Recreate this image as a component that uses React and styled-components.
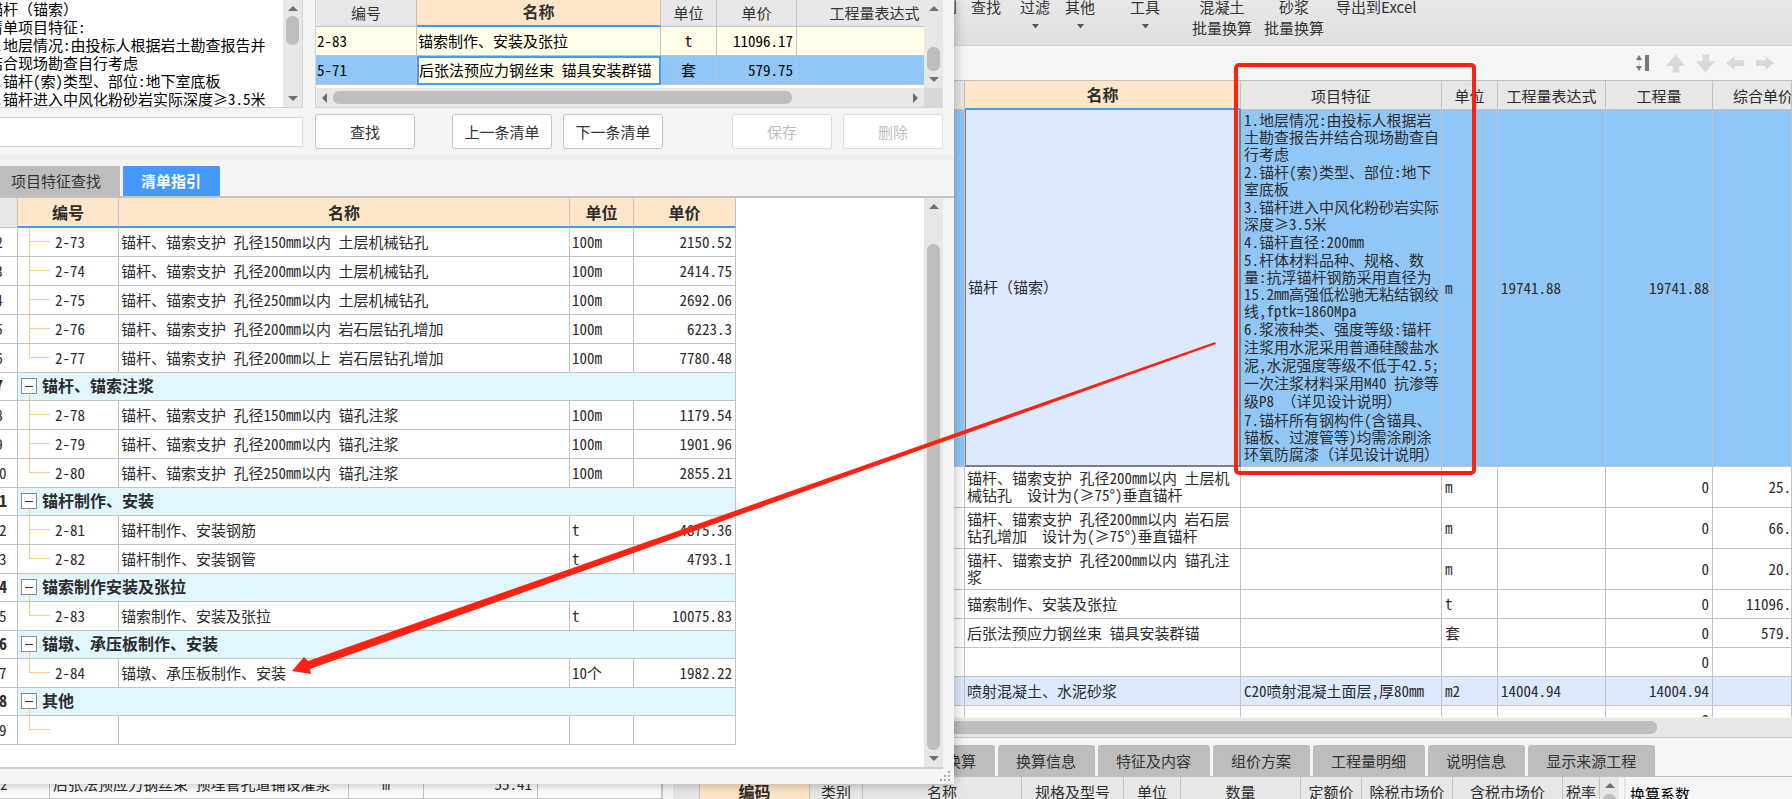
import React from "react";
import styled, { createGlobalStyle, css } from "styled-components";

const GRID_FONT = '"Noto Sans Mono CJK SC", "Noto Sans CJK SC", monospace';
const UI_FONT = '"Noto Sans CJK SC", sans-serif';
const LINE = "#c3c3c3";
const CREAM = "#ffe6c8";
const BLUE = "#4499ff";
const RED = "#ff2212";

const Global = createGlobalStyle`
  *, *::before, *::after { box-sizing: border-box; }
  body { margin: 0; overflow: hidden; font: 15px/17px ${GRID_FONT}; color: #2c2c2c; }
  button, input, textarea { font: inherit; color: inherit; }
`;

const Desktop = styled.div`
  position: relative;
  height: 100vh;
  overflow: hidden;
  background: #f5f5f5;
`;

/* ---------- shared parts ---------- */

const ScrollBar = styled.div`
  display: flex;
  flex: none;
  flex-direction: ${(p) => (p.$horizontal ? "row" : "column")};
  align-items: center;
  background: #e7e7e7;
  ${(p) => (p.$horizontal ? "height: 19px; padding: 0 5px;" : "width: 19px; padding: 5px 0;")}
`;

const Track = styled.div`
  display: flex;
  flex: 1;
  min-height: 0;
  flex-direction: ${(p) => (p.$horizontal ? "row" : "column")};
  padding: ${(p) => p.$pad || "0"};
`;

const Thumb = styled.div`
  border-radius: 6px;
  background: #bebebe;
  ${(p) => (p.$horizontal ? "height: 13px;" : "width: 13px;")}
  flex: ${(p) => p.$flex || "1"};
`;

const arrows = {
  up: "M0 6 L5 1 L10 6Z",
  down: "M0 1 L10 1 L5 6Z",
  left: "M6 0 L1 5 L6 10Z",
  right: "M1 0 L6 5 L1 10Z",
};

function Arrow({ dir, color = "#6e6e78" }) {
  const side = dir === "left" || dir === "right";
  return (
    <svg width={side ? 7 : 10} height={side ? 10 : 7} aria-hidden="true">
      <path d={arrows[dir]} fill={color} />
    </svg>
  );
}

const Table = styled.table`
  width: ${(p) => p.$width || "100%"};
  table-layout: fixed;
  border-collapse: separate;
  border-spacing: 0;
`;

const Th = styled.th`
  height: 29px;
  padding: ${(p) => p.$pad || "0"};
  border: solid ${LINE};
  border-width: 0 1px 1px 0;
  background: #e7e7e7;
  font-weight: 400;
  white-space: nowrap;
  overflow: hidden;
  text-align: ${(p) => p.$align || "center"};
  ${(p) =>
    p.$active &&
    css`
      background: ${CREAM};
      border-bottom: ${p.$plain ? `1px solid ${LINE}` : `2px solid ${BLUE}`};
      font-size: 16px;
      font-weight: 700;
    `}
`;

const Td = styled.td`
  height: ${(p) => p.$h || 29}px;
  padding: ${(p) => p.$pad || "0 3px 2px"};
  border: solid ${LINE};
  border-width: 0 1px 1px 0;
  text-align: ${(p) => p.$align || "left"};
  white-space: nowrap;
  overflow: hidden;
  ${(p) => p.$selected && "background: #dce9ff; border: 2px solid #7c7f84; border-width: 0 2px 2px 1px;"}
`;

const Tab = styled.button`
  height: 31px;
  flex: none;
  padding: 0 19px 0 18px;
  border: 0;
  border-radius: 3px 3px 0 0;
  font: ${(p) => (p.$active ? 700 : 400)} 15px/17px ${UI_FONT};
  background: ${(p) => (p.$active ? BLUE : "#bdbdbd")};
  color: ${(p) => (p.$active ? "#fff" : "#333")};
`;

/* ---------- main window ---------- */

const MainWindow = styled.main`
  display: flex;
  flex-direction: column;
  height: 100%;
`;

const Ribbon = styled.header`
  display: flex;
  flex: none;
  align-items: flex-end;
  height: 46px;
  padding: 0 0 3px 942px;
  border-bottom: 1px solid #d2d2d2;
  background: linear-gradient(#e8e8e8, #dfdfdf);
  overflow: hidden;
`;

const RibbonButton = styled.button`
  display: flex;
  flex: none;
  flex-direction: column;
  align-items: center;
  height: 46px;
  margin-left: ${(p) => p.$gap}px;
  padding: 0;
  border: 0;
  background: none;
  font: 15px/21px ${UI_FONT};
  color: #333;
  svg { margin-top: 7px; }
`;

const Panes = styled.div`
  display: flex;
  flex: 1;
  min-height: 0;
`;

const LeftPane = styled.section`
  display: flex;
  flex: none;
  flex-direction: column;
  justify-content: flex-end;
  width: 663px;
  margin-right: 10px;
  border-right: 1px solid ${LINE};
  background: #fff;
`;

const RightPane = styled.section`
  display: flex;
  flex: 1;
  flex-direction: column;
  min-width: 0;
`;

const MoveBar = styled.div`
  display: flex;
  flex: none;
  align-items: center;
  justify-content: flex-end;
  gap: 16px;
  height: 35px;
  padding-right: 17px;
  border-bottom: 1px solid ${LINE};
`;

const MoveGroup = styled.div`
  display: flex;
  gap: 11px;
`;

const IconButton = styled.button`
  display: flex;
  padding: 0;
  border: 0;
  background: none;
`;

const BillArea = styled.div`
  flex: 1;
  min-height: 0;
  overflow: hidden;
  border-bottom: 1px solid #f5f5f5;
  background: #fff;
`;

const BillRow = styled.tr`
  background: ${(p) => p.$bg || "#fff"};
`;

const Features = styled.ol`
  display: flex;
  flex-direction: column;
  gap: 1px;
  height: 352px;
  margin: 0;
  padding: 0;
  list-style: none;
  li:nth-last-child(2) { line-height: 18px; }
`;

const TextLine = styled.div`
  white-space: pre;
`;

const TabStrip = styled.nav`
  display: flex;
  flex: none;
  align-items: flex-end;
  gap: 3px;
  height: ${(p) => p.$h}px;
  padding-left: ${(p) => p.$left}px;
  border: solid ${LINE};
  border-width: ${(p) => (p.$top ? "1px 0 0" : "0 0 2px")};
  overflow: hidden;
`;

const Detail = styled.div`
  display: flex;
  flex: none;
  height: 23px;
  border-top: 1px solid ${LINE};
  overflow: hidden;
`;

const DetailGrid = styled.div`
  width: 927px;
  flex: none;
  overflow: hidden;
`;

const Ratio = styled.div`
  flex: 1;
  margin-left: 5px;
  padding: 8px 4px;
  border-left: 2px solid #e4e4e4;
  color: #000;
`;

/* ---------- dialog ---------- */

const Dialog = styled.section`
  position: absolute;
  top: 0;
  bottom: 15px;
  left: -18px;
  display: flex;
  flex-direction: column;
  width: 972px;
  background: #f4f4f4;
  box-shadow: 0 0 12px rgba(0, 0, 0, 0.3);
`;

const TopRow = styled.div`
  display: flex;
  flex: none;
  gap: 12px;
  height: 108px;
  padding-right: 11px;
`;

const NoteBox = styled.div`
  display: flex;
  flex: none;
  width: 321px;
  border: solid #d4d4d4;
  border-width: 0 1px 1px 0;
`;

const Note = styled.textarea`
  flex: 1;
  min-width: 0;
  padding: 0 0 0 6px;
  border: 0;
  outline: 0;
  resize: none;
  overflow: hidden;
  white-space: pre;
  line-height: 18px;
  color: #000;
  background: #fff;
`;

const QuotaBox = styled.div`
  display: grid;
  flex: 1;
  min-width: 0;
  grid-template: 88px 19px / 1fr 19px;
  border: solid #d4d4d4;
  border-width: 0 0 1px 1px;
`;

const QuotaView = styled.div`
  overflow: hidden;
  background: #fff;
  color: #000;
  th { height: 27px; padding-bottom: 2px; color: #333; }
`;

const Corner = styled.div`
  background: #d8d8d8;
`;

const EditCell = styled(Td)`
  border: 2px solid ${BLUE};
  background: #ffffea;
`;

const Actions = styled.div`
  display: flex;
  flex: none;
  align-items: center;
  height: 52px;
  padding-right: 11px;
  border-bottom: 5px solid #eeeeee;
  margin-bottom: 6px;
`;

const SearchInput = styled.input`
  width: 321px;
  height: 30px;
  margin-right: 12px;
  padding: 0 7px;
  border: 1px solid #d6d6d6;
  background: #fff;
  outline: 0;
`;

const Button = styled.button`
  width: 100px;
  height: 35px;
  margin-left: ${(p) => p.$gap || 0}px;
  padding: 0;
  border: 1px solid #c4c4c4;
  border-radius: 3px;
  background: #fff;
  font: 15px/17px ${UI_FONT};
  color: #333;
  &:disabled { border-color: #dcdcdc; color: #bfbfbf; }
`;

const GuideBox = styled.div`
  display: flex;
  flex: 1;
  min-height: 0;
  margin-right: 11px;
  border-bottom: 2px solid #d0d0d0;
`;

const GuideView = styled.div`
  flex: 1;
  overflow: hidden;
  background: #fff;
  th { height: 30px; }
`;

const GroupRow = styled.tr`
  font-size: 16px;
  font-weight: 700;
`;

const GroupCell = styled(Td)`
  background: #e2f6ff;
`;

const Tree = styled.div`
  display: flex;
  align-items: center;
  gap: 5px;
  height: ${(p) => p.$h}px;
`;

const TreeText = styled.span`
  padding-bottom: 2px;
`;

const Toggle = styled.button`
  display: flex;
  flex: none;
  padding: 0;
  border: 0;
  background: none;
`;

const Footer = styled.footer`
  display: flex;
  flex: none;
  justify-content: flex-end;
  height: 15px;
  padding: 2px 3px;
`;

const Marks = styled.svg`
  position: absolute;
  top: 0;
  left: 0;
  width: 100%;
  height: 100%;
  pointer-events: none;
`;

/* ---------- data ---------- */

const ribbon = [
  { text: "到", gap: 0 },
  { text: "查找", gap: 14 },
  { text: "过滤", gap: 19, menu: true },
  { text: "其他", gap: 15, menu: true },
  { text: "工具", gap: 35, menu: true },
  { text: "混凝土", second: "批量换算", gap: 32 },
  { text: "砂浆", second: "批量换算", gap: 12 },
  { text: "导出到Excel", gap: 12 },
];

const features = [
  ["1.地层情况:由投标人根据岩", "土勘查报告并结合现场勘查自", "行考虑"],
  ["2.锚杆(索)类型、部位:地下", "室底板"],
  ["3.锚杆进入中风化粉砂岩实际", "深度≥3.5米"],
  ["4.锚杆直径:200mm"],
  ["5.杆体材料品种、规格、数", "量:抗浮锚杆钢筋采用直径为", "15.2mm高强低松驰无粘结钢绞", "线,fptk=1860Mpa"],
  ["6.浆液种类、强度等级:锚杆", "注浆用水泥采用普通硅酸盐水", "泥,水泥强度等级不低于42.5;", "一次注浆材料采用M40 抗渗等", "级P8 （详见设计说明）"],
  ["7.锚杆所有钢构件(含锚具、", "锚板、过渡管等)均需涂刷涂", "环氧防腐漆（详见设计说明）"],
];

const bill = [
  { h: 41, name: ["锚杆、锚索支护 孔径200mm以内 土层机", "械钻孔  设计为(≥75°)垂直锚杆"], unit: "m", qty: "0", price: "25." },
  { h: 41, name: ["锚杆、锚索支护 孔径200mm以内 岩石层", "钻孔增加  设计为(≥75°)垂直锚杆"], unit: "m", qty: "0", price: "66." },
  { h: 41, name: ["锚杆、锚索支护 孔径200mm以内 锚孔注", "浆"], unit: "m", qty: "0", price: "20." },
  { name: ["锚索制作、安装及张拉"], unit: "t", qty: "0", price: "11096." },
  { name: ["后张法预应力钢丝束 锚具安装群锚"], unit: "套", qty: "0", price: "579." },
  { name: [], qty: "0" },
  { bg: "#dce9ff", name: ["喷射混凝土、水泥砂浆"], feature: "C20喷射混凝土面层,厚80mm", unit: "m2", expr: "14004.94", qty: "14004.94" },
  { name: [], qty: "0" },
];

const bottomTabs = ["工料机显示", "单价构成", "标准换算", "换算信息", "特征及内容", "组价方案", "工程量明细", "说明信息", "显示来源工程"];

const detailCols = [
  ["", 27], ["编码", 110], ["类别", 53], ["名称", 159], ["规格及型号", 102], ["单位", 57],
  ["数量", 120], ["定额价", 61], ["除税市场价", 91], ["含税市场价", 110], ["税率", 37],
];

const S = "锚杆、锚索支护 孔径";
const guide = [
  { no: 2, code: "2-73", name: S + "150mm以内 土层机械钻孔", unit: "100m", price: "2150.52" },
  { no: 3, code: "2-74", name: S + "200mm以内 土层机械钻孔", unit: "100m", price: "2414.75" },
  { no: 4, code: "2-75", name: S + "250mm以内 土层机械钻孔", unit: "100m", price: "2692.06" },
  { no: 5, code: "2-76", name: S + "200mm以内 岩石层钻孔增加", unit: "100m", price: "6223.3" },
  { no: 6, code: "2-77", name: S + "200mm以上 岩石层钻孔增加", unit: "100m", price: "7780.48", last: true },
  { no: 7, group: "锚杆、锚索注浆" },
  { no: 8, code: "2-78", name: S + "150mm以内 锚孔注浆", unit: "100m", price: "1179.54" },
  { no: 9, code: "2-79", name: S + "200mm以内 锚孔注浆", unit: "100m", price: "1901.96" },
  { no: 10, code: "2-80", name: S + "250mm以内 锚孔注浆", unit: "100m", price: "2855.21", last: true },
  { no: 11, group: "锚杆制作、安装" },
  { no: 12, code: "2-81", name: "锚杆制作、安装钢筋", unit: "t", price: "4875.36" },
  { no: 13, code: "2-82", name: "锚杆制作、安装钢管", unit: "t", price: "4793.1", last: true },
  { no: 14, group: "锚索制作安装及张拉" },
  { no: 15, code: "2-83", name: "锚索制作、安装及张拉", unit: "t", price: "10075.83", last: true },
  { no: 16, group: "锚墩、承压板制作、安装" },
  { no: 17, code: "2-84", name: "锚墩、承压板制作、安装", unit: "10个", price: "1982.22", last: true },
  { no: 18, group: "其他" },
  { no: 19, last: true },
];

const note = `锚杆（锚索）
清单项目特征:
1.地层情况:由投标人根据岩土勘查报告并
结合现场勘查自行考虑
2.锚杆(索)类型、部位:地下室底板
3.锚杆进入中风化粉砂岩实际深度≥3.5米`;

const Lines = ({ of }) => of.map((t, i) => <TextLine key={i}>{t}</TextLine>);

const Cols = ({ widths }) => (
  <colgroup>
    {widths.map((w, i) => <col key={i} width={w || undefined} />)}
  </colgroup>
);

const MOVE = {
  上移: "M10 0 L20 12 L14 12 L14 19 L7 19 L7 12 L0 12Z",
  下移: "M7 0 L14 0 L14 7 L20 7 L10 19 L0 7 L7 7Z",
  左移: "M0 9 L9 2 L9 6 L19 6 L19 12 L9 12 L9 16Z",
  右移: "M19 9 L10 2 L10 6 L0 6 L0 12 L10 12 L10 16Z",
};

function MoveTools() {
  return (
    <MoveBar>
      <IconButton aria-label="排序">
        <svg width="15" height="18">
          <path d="M1 6 L4 1 L7 6Z M1 12 L7 12 L4 17Z M10 1h4v16h-4z" fill="#777" />
          <path d="M4 6v6" stroke="#aaa" strokeDasharray="1 1" />
        </svg>
      </IconButton>
      <MoveGroup>
        {Object.entries(MOVE).map(([label, d]) => (
          <IconButton key={label} aria-label={label} disabled>
            <svg width="19" height="19" viewBox="0 0 20 19"><path d={d} fill="#d9d9d9" /></svg>
          </IconButton>
        ))}
      </MoveGroup>
    </MoveBar>
  );
}

function BillTable() {
  return (
    <BillArea>
      <Table>
        <Cols widths={[292, 276, 201, 56, 108, 107, 0]} />
        <thead>
          <tr>
            <Th /><Th $active>名称</Th><Th>项目特征</Th><Th>单位</Th><Th>工程量表达式</Th><Th>工程量</Th>
            <Th $align="left" $pad="0 0 0 20px">综合单价</Th>
          </tr>
        </thead>
        <tbody>
          <BillRow $bg="#91c7f6">
            <Td $h={357} />
            <Td $h={357} $selected $pad="0 2px 2px">锚杆（锚索）</Td>
            <Td $h={357}>
              <Features>
                {features.map((f, i) => <li key={i}><Lines of={f} /></li>)}
              </Features>
            </Td>
            <Td>m</Td><Td>19741.88</Td><Td $align="right">19741.88</Td><Td />
          </BillRow>
          {bill.map((r, i) => (
            <BillRow key={i} $bg={r.bg}>
              <Td $h={r.h} />
              <Td $h={r.h} $pad="0 2px 2px"><Lines of={r.name} /></Td>
              <Td>{r.feature}</Td>
              <Td>{r.unit}</Td>
              <Td>{r.expr}</Td>
              <Td $align="right">{r.qty}</Td>
              <Td $align="right" $pad="0 0 2px">{r.price}</Td>
            </BillRow>
          ))}
        </tbody>
      </Table>
    </BillArea>
  );
}

function Branch({ last }) {
  return (
    <svg width="32" height="28" aria-hidden="true">
      <path d={`M11.5 0V${last ? 14 : 28}M11 13.5H32`} stroke="#ffcc85" fill="none" />
    </svg>
  );
}

function GuideTable() {
  return (
    <Table $width="754px">
      <Cols widths={[36, 101, 451, 64, 102]} />
      <thead>
        <tr>
          <Th /><Th $active>编号</Th><Th $active>名称</Th><Th $active>单位</Th><Th $active>单价</Th>
        </tr>
      </thead>
      <tbody>
        {guide.map((r) =>
          r.group ? (
            <GroupRow key={r.no}>
              <Td $h={28} $align="center" $pad="0 1px 2px 0">{r.no}</Td>
              <GroupCell $h={28} $pad="0" colSpan={4}>
                <Tree $h={27}>
                  <Toggle aria-label="折叠">
                    <svg width="19" height="27">
                      <path d="M11.5 21V27" stroke="#ffcc85" />
                      <rect x="3.5" y="5.5" width="15" height="15" fill="#fff" stroke="#8c8c8c" />
                      <path d="M7 13.5H15" stroke="#333" />
                    </svg>
                  </Toggle>
                  <TreeText>{r.group}</TreeText>
                </Tree>
              </GroupCell>
            </GroupRow>
          ) : (
            <tr key={r.no}>
              <Td $align="center" $pad="0 1px 2px 0">{r.no}</Td>
              <Td $pad="0"><Tree $h={28}><Branch last={r.last} /><TreeText>{r.code}</TreeText></Tree></Td>
              <Td $pad="0 2px 2px">{r.name}</Td>
              <Td $pad="0 2px 2px">{r.unit}</Td>
              <Td $align="right">{r.price}</Td>
            </tr>
          )
        )}
      </tbody>
    </Table>
  );
}

function QuotaTable() {
  return (
    <QuotaBox>
      <QuotaView>
        <Table $width="637px">
          <Cols widths={[101, 244, 56, 80, 156]} />
          <thead>
            <tr><Th>编号</Th><Th $active>名称</Th><Th>单位</Th><Th>单价</Th><Th>工程量表达式</Th></tr>
          </thead>
          <tbody>
            <BillRow $bg="#ffffea">
              <Td $pad="0 1px 2px">2-83</Td><Td $pad="0 1px 2px">锚索制作、安装及张拉</Td><Td $align="center">t</Td>
              <Td $align="right">11096.17</Td><Td />
            </BillRow>
            <BillRow $bg="#91c7f6">
              <Td $pad="0 1px 2px">5-71</Td><EditCell $pad="0 0 2px">后张法预应力钢丝束 锚具安装群锚</EditCell>
              <Td $align="center">套</Td><Td $align="right">579.75</Td><Td />
            </BillRow>
          </tbody>
        </Table>
      </QuotaView>
      <ScrollBar>
        <Arrow dir="up" />
        <Track $pad="35px 0 5px"><Thumb /></Track>
        <Arrow dir="down" />
      </ScrollBar>
      <ScrollBar $horizontal>
        <Arrow dir="left" />
        <Track $horizontal $pad="0 120px 0 5px"><Thumb $horizontal /></Track>
        <Arrow dir="right" />
      </ScrollBar>
      <Corner />
    </QuotaBox>
  );
}

function GuideDialog() {
  return (
    <Dialog role="dialog" aria-label="清单指引">
      <TopRow>
        <NoteBox>
          <Note aria-label="清单项目特征" readOnly defaultValue={note} />
          <ScrollBar>
            <Arrow dir="up" />
            <Track $pad="4px 0 50px"><Thumb /></Track>
            <Arrow dir="down" />
          </ScrollBar>
        </NoteBox>
        <QuotaTable />
      </TopRow>
      <Actions>
        <SearchInput aria-label="查找内容" />
        <Button>查找</Button>
        <Button $gap={37}>上一条清单</Button>
        <Button $gap={11}>下一条清单</Button>
        <Button $gap={69} disabled>保存</Button>
        <Button $gap={11} disabled>删除</Button>
      </Actions>
      <TabStrip $h={32} $left={11}>
        <Tab>项目特征查找</Tab>
        <Tab $active>清单指引</Tab>
      </TabStrip>
      <GuideBox>
        <GuideView><GuideTable /></GuideView>
        <ScrollBar>
          <Arrow dir="up" />
          <Track $pad="34px 0 5px"><Thumb /></Track>
          <Arrow dir="down" />
        </ScrollBar>
      </GuideBox>
      <Footer>
        <svg width="11" height="11" aria-hidden="true">
          <path d="M8 0h2v2h-2zM4 4h2v2h-2zM8 4h2v2h-2zM0 8h2v2h-2zM4 8h2v2h-2zM8 8h2v2h-2z" fill="#a8a8a8" />
        </svg>
      </Footer>
    </Dialog>
  );
}

export default function App() {
  return (
    <Desktop>
      <Global />
      <MainWindow>
        <Ribbon>
          {ribbon.map((b) => (
            <RibbonButton key={b.text} $gap={b.gap}>
              <span>{b.text}</span>
              {b.second && <span>{b.second}</span>}
              {b.menu && <svg width="7" height="5"><path d="M0 0H7L3.5 4.5Z" fill="#555" /></svg>}
            </RibbonButton>
          ))}
        </Ribbon>
        <Panes>
          <LeftPane>
            <Table>
              <Cols widths={[50, 299, 75, 114, 0]} />
              <tbody>
                <tr>
                  <Td $pad="0 0 2px">2</Td><Td>后张法预应力钢丝束 预埋管孔道铺设灌浆</Td>
                  <Td $align="center">m</Td><Td $align="right" $pad="0 5px 2px">55.41</Td><Td />
                </tr>
              </tbody>
            </Table>
          </LeftPane>
          <RightPane>
            <MoveTools />
            <BillTable />
            <ScrollBar $horizontal>
              <Track $horizontal $pad="0 130px 0 0"><Thumb $horizontal /></Track>
            </ScrollBar>
            <TabStrip $h={39} $left={10} $top>
              {bottomTabs.map((t) => <Tab key={t}>{t}</Tab>)}
            </TabStrip>
            <Detail>
              <DetailGrid>
                <Table>
                  <Cols widths={detailCols.map((c) => c[1])} />
                  <thead>
                    <tr>
                      {detailCols.map(([t]) => <Th key={t} $active={t === "编码"} $plain>{t}</Th>)}
                    </tr>
                  </thead>
                </Table>
              </DetailGrid>
              <ScrollBar>
                <Arrow dir="up" />
                <Track $pad="5px 0 0"><Thumb $flex="0 0 24px" /></Track>
              </ScrollBar>
              <Ratio>换算系数</Ratio>
            </Detail>
          </RightPane>
        </Panes>
      </MainWindow>
      <GuideDialog />
      <Marks aria-hidden="true">
        <rect x="1236" y="65" width="238" height="408" rx="3" fill="none" stroke={RED} strokeWidth="4" />
        <path d="M292 671 L304 657 L308 661 L1215 342 L1216 344 L310 669 L311 674Z" fill={RED} />
      </Marks>
    </Desktop>
  );
}
